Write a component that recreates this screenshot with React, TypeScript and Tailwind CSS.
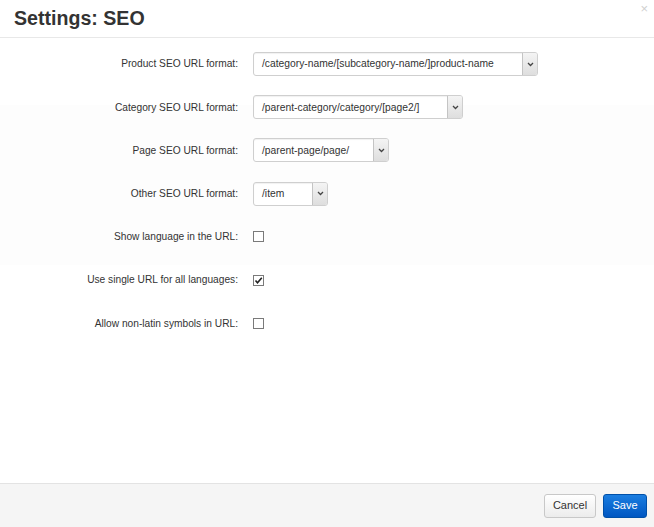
import React from "react";

const font = { fontFamily: '"Liberation Sans", Arial, sans-serif' };

function Chevron() {
  return (
    <svg width="7" height="5" viewBox="0 0 7 5" className="block">
      <path d="M1 1 L3.5 3.5 L6 1" fill="none" stroke="#444" strokeWidth="1.3" />
    </svg>
  );
}

function Select({ value, width }: { value: string; width: string }) {
  return (
    <div
      className={`flex h-[24px] items-stretch rounded-[3px] border border-[#cfcfcf] bg-white shadow-[inset_0_1px_1px_rgba(0,0,0,0.06)] ${width}`}
    >
      <div className="flex flex-1 items-center pl-[8px] text-[10.3px] text-[#333]">{value}</div>
      <div className="flex w-[15px] items-center justify-center rounded-r-[2px] border-l border-[#c4c4c4] bg-[linear-gradient(to_bottom,#f4f4f4,#dedede)]">
        <Chevron />
      </div>
    </div>
  );
}

function Checkbox({ checked }: { checked?: boolean }) {
  return (
    <div className="flex h-[11px] w-[11px] items-center justify-center border border-[#7a7a7a] bg-white">
      {checked && (
        <svg width="9" height="9" viewBox="0 0 9 9">
          <path d="M1.5 4.5 L3.5 6.8 L7.8 1.8" fill="none" stroke="#222" strokeWidth="1.6" />
        </svg>
      )}
    </div>
  );
}

function Row({ label, children }: { label: string; children: React.ReactNode }) {
  return (
    <div className="flex h-[43.2px] items-center">
      <div className="w-[238px] shrink-0 text-right text-[10.2px] text-[#333]">{label}</div>
      <div className="ml-[15px] flex items-center">{children}</div>
    </div>
  );
}

export default function App() {
  return (
    <div className="flex h-[527px] w-[654px] flex-col bg-white" style={font}>
      <div className="relative flex h-[38px] shrink-0 items-center border-b border-[#e8e8e8] pl-[14px]">
        <h1 className="text-[19.6px] font-bold text-[#333]">Settings: SEO</h1>
        <span className="absolute right-[6px] top-[2px] text-[13px] leading-none text-[#d0d0d0]">×</span>
      </div>
      <div className="flex-1 bg-[linear-gradient(to_bottom,#fff_67px,#fdfdfd_67px,#fdfdfd_227px,#fff_227px)] pt-[4.5px]">
        <Row label="Product SEO URL format:">
          <Select value="/category-name/[subcategory-name/]product-name" width="w-[285px]" />
        </Row>
        <Row label="Category SEO URL format:">
          <Select value="/parent-category/category/[page2/]" width="w-[210px]" />
        </Row>
        <Row label="Page SEO URL format:">
          <Select value="/parent-page/page/" width="w-[136px]" />
        </Row>
        <Row label="Other SEO URL format:">
          <Select value="/item" width="w-[75px]" />
        </Row>
        <Row label="Show language in the URL:">
          <Checkbox />
        </Row>
        <Row label="Use single URL for all languages:">
          <Checkbox checked />
        </Row>
        <Row label="Allow non-latin symbols in URL:">
          <Checkbox />
        </Row>
      </div>
      <div className="flex h-[44px] shrink-0 items-center justify-end gap-[7px] border-t border-[#e3e3e3] bg-[#f5f5f5] pr-[7px]">
        <button className="h-[24px] w-[52px] rounded-[3px] border border-[#c8c8c8] bg-[linear-gradient(to_bottom,#fff,#ececec)] text-[11px] text-[#333]">
          Cancel
        </button>
        <button className="h-[24px] w-[44px] rounded-[3px] border border-[#0050a8] bg-[linear-gradient(to_bottom,#1a7de0,#0057c2)] text-[11px] text-white">
          Save
        </button>
      </div>
    </div>
  );
}
